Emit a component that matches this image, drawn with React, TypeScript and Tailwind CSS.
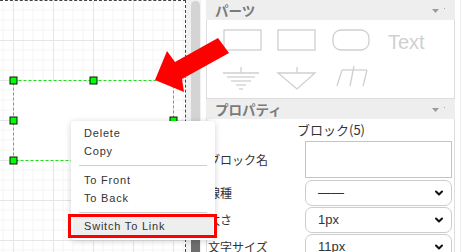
import { ChevronDown } from "lucide-react";

const jp = "font-['Noto_Sans_CJK_JP','Noto_Sans',sans-serif]";

function PanelHeader({ title }: { title: string }) {
  return (
    <div className="shrink-0 flex items-center h-[20px] bg-[#eeeeee] pl-[9px] pr-[10px]">
      <span className={`${jp} text-[13.5px] font-bold text-[#7a7a7a] leading-[20px]`}>{title}</span>
      <div className="ml-auto flex items-start gap-[5px] pt-[1px]">
        <svg width="7" height="4" viewBox="0 0 7 4">
          <path d="M0 0 L7 0 L3.5 4 Z" fill="#9a9a9a" />
        </svg>
        <div className="w-[1px] h-[1px] bg-[#aaa] -mt-[1px]" />
      </div>
    </div>
  );
}

function Parts() {
  return (
    <svg width="247" height="77" viewBox="0 0 247 77" className="block">
      <g fill="none" stroke="#cfcfcf" strokeWidth="1.3">
        <rect x="17" y="10" width="37" height="20" />
        <rect x="71" y="10" width="37" height="20" />
        <rect x="126" y="10" width="36" height="20" rx="8" />
        {/* ground */}
        <line x1="34" y1="47" x2="34" y2="53" />
        <line x1="16" y1="53" x2="52" y2="53" />
        <line x1="20" y1="57" x2="48" y2="57" />
        <line x1="24" y1="61" x2="44" y2="61" />
        <line x1="29" y1="65" x2="39" y2="65" />
        <line x1="32" y1="69" x2="36" y2="69" />
        {/* triangle */}
        <line x1="90" y1="47" x2="90" y2="53" />
        <path d="M71 53 L108 53 L90 69 Z" />
        {/* slanted */}
        <path d="M135 50 L160 50" />
        <path d="M135 50 L130 66" />
        <path d="M147 46 L143 66" />
        <path d="M160 50 L156 66" />
      </g>
      <text x="181" y="29" fill="#d0d0d0" fontSize="20" fontFamily="Liberation Sans, Arial, sans-serif">
        Text
      </text>
    </svg>
  );
}

function SelectBox({ value }: { value: string }) {
  return (
    <div className="shrink-0 flex items-center h-[26px] w-[147px] border border-[#cccccc] rounded-[7px] bg-white pl-[12px] pr-[6px]">
      <span className="font-['Liberation_Sans',Arial,sans-serif] text-[13px] text-[#333]">{value}</span>
      <ChevronDown className="ml-auto w-[12px] h-[12px] text-[#111]" strokeWidth={4} />
    </div>
  );
}

function PropRow({ label, children }: { label: string; children: React.ReactNode }) {
  return (
    <div className="shrink-0 flex items-center">
      <div className={`${jp} w-[98px] pl-[1px] text-[12px] text-[#333]`}>{label}</div>
      {children}
    </div>
  );
}

function Canvas() {
  return (
    <div className="shrink-0 w-[186px] h-[252px] border-t border-r border-dashed border-[#444] bg-white">
      <svg width="185" height="251" viewBox="0 1 185 251" className="block">
        <defs>
          <pattern id="grid" width="40" height="40" patternUnits="userSpaceOnUse" x="13" y="0">
            <path d="M10 0 V40 M20 0 V40 M30 0 V40 M0 10 H40 M0 20 H40 M0 30 H40" stroke="#f4f4f4" strokeWidth="1" />
            <path d="M0.5 0 V40 M0 0.5 H40" stroke="#e6e6e6" strokeWidth="1" />
          </pattern>
        </defs>
        <rect x="0" y="0" width="185" height="252" fill="url(#grid)" />
        <rect x="13.5" y="80.5" width="160" height="80" fill="#fff" stroke="#22dd22" strokeWidth="1" strokeDasharray="3 2" />
        {[
          [13.5, 80.5],
          [93.5, 80.5],
          [173.5, 80.5],
          [13.5, 120.5],
          [173.5, 120.5],
          [13.5, 160.5],
          [93.5, 160.5],
          [173.5, 160.5],
        ].map(([x, y], i) => (
          <rect key={i} x={x - 3.5} y={y - 3.5} width="7" height="7" fill="#00ff00" stroke="#111" strokeWidth="1" />
        ))}
      </svg>
    </div>
  );
}

const menuText = "font-['Liberation_Sans',Arial,sans-serif] text-[11px] tracking-[0.8px] text-[#333]";

function MenuItem({ label, active }: { label: string; active?: boolean }) {
  return (
    <div className={`h-[18px] mx-[2px] pl-[11px] flex items-center ${menuText} ${active ? "bg-[#eeeeee]" : ""}`}>
      {label}
    </div>
  );
}

function ContextMenu() {
  return (
    <div className="absolute left-[71px] top-[121px] w-[144px] h-[119px] bg-white rounded-[4px] shadow-[0_1px_6px_rgba(0,0,0,0.18)] pt-[3px]">
      <MenuItem label="Delete" />
      <MenuItem label="Copy" />
      <div className="mx-[8px] my-[5px] h-[1px] bg-[#cfcfcf]" />
      <MenuItem label="To Front" />
      <MenuItem label="To Back" />
      <div className="mx-[8px] mt-[5px] mb-[4px] h-[1px] bg-[#cfcfcf]" />
      <MenuItem label="Switch To Link" active />
    </div>
  );
}

export default function App() {
  return (
    <div className="relative w-[465px] h-[252px] overflow-hidden bg-white flex">
      <Canvas />
      {/* scrollbar */}
      <div className="shrink-0 w-[15px] h-[252px] bg-[#f1f1f1] pl-[5px] flex flex-col">
        <div className="shrink-0 w-[9px] mt-[1px] h-[236px] bg-[#d4d4d4] rounded-t-full" />
        <div className="w-[9px] flex-1 mt-[1px] bg-[#6e6e6e]" />
      </div>
      <div className="shrink-0 w-[5px]" />
      {/* right panel */}
      <div className="shrink-0 w-[249px] h-[252px] flex flex-col overflow-hidden">
        <PanelHeader title="パーツ" />
        <div className="shrink-0 h-[79px] border-x border-b border-[#dddddd]">
          <Parts />
        </div>
        <PanelHeader title="プロパティ" />
        <div className="shrink-0 border-x border-[#dddddd] pr-[1px]">
          <div className={`${jp} h-[22px] flex items-center justify-center pl-[2px] text-[13px] text-[#333]`}>
            ブロック(5)
          </div>
          <PropRow label="ブロック名">
            <div className="w-[147px] h-[37px] border border-[#c4c4c4] bg-white" />
          </PropRow>
          <div className="h-[2px]" />
          <div className="flex flex-col gap-[1px]">
            <PropRow label="線種">
              <SelectBox value="——" />
            </PropRow>
            <PropRow label="太さ">
              <SelectBox value="1px" />
            </PropRow>
            <PropRow label="文字サイズ">
              <SelectBox value="11px" />
            </PropRow>
          </div>
        </div>
      </div>
      <div className="flex-1 border-r border-[#eeeeee] mr-[4px]" />

      <ContextMenu />
      {/* highlight annotation */}
      <div className="absolute left-[68px] top-[214px] w-[149px] h-[24px] border-[3px] border-[#ff0000]" />
      {/* red arrow */}
      <svg className="absolute left-0 top-0" width="465" height="252" viewBox="0 0 465 252">
        <polygon points="155,80 167,51 175,62 218,38 229,53 182,79 184,92" fill="#ff0000" />
      </svg>
    </div>
  );
}
